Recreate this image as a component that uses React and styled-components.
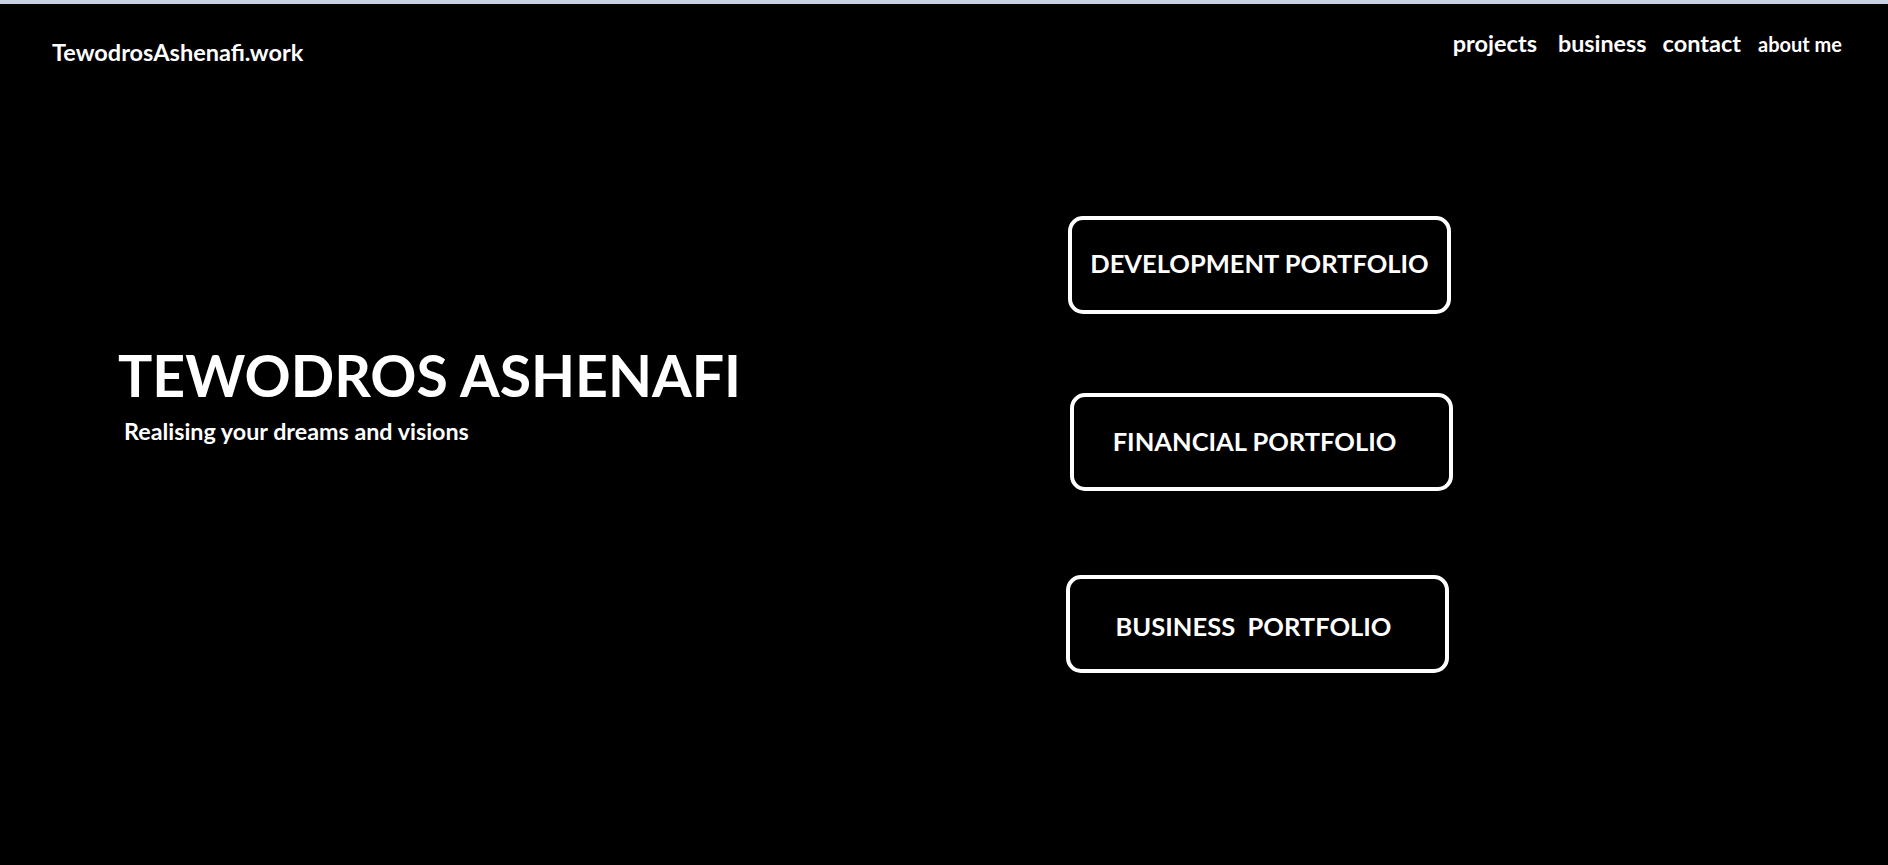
import styled, { createGlobalStyle } from "styled-components";

const GlobalStyle = createGlobalStyle`
    * {
        box-sizing: border-box;
    }
    body {
        margin: 0;
        background-color: #000000;
        font-family: 'Lato', 'Liberation Sans', sans-serif;
    }
`

const navLinks = [
    { label: "projects", size: 23.5, space: 0 },
    { label: "business", size: 23.3, space: 21 },
    { label: "contact", size: 23.5, space: 16 },
    { label: "about me", size: 20, space: 17 }
];

const portfolios = [
    { label: "DEVELOPMENT PORTFOLIO", shift: 0, top: 0, offset: 0, lift: 5 },
    { label: "FINANCIAL PORTFOLIO", shift: 2, top: 79, offset: 14, lift: 2 },
    { label: "BUSINESS\u00a0 PORTFOLIO", shift: -2, top: 84, offset: 8, lift: -4 }
];

export default function App() {
    return (
        <>
            <GlobalStyle />
            <Page>
                <Header>
                    <Logo>TewodrosAshenafi.work</Logo>
                    <Nav>
                        {navLinks.map((link) => (
                            <NavLink key={link.label} size={link.size} space={link.space}>
                                {link.label}
                            </NavLink>
                        ))}
                    </Nav>
                </Header>
                <Hero>
                    <Intro>
                        <Name>TEWODROS ASHENAFI</Name>
                        <Tagline>Realising your dreams and visions</Tagline>
                    </Intro>
                    <Portfolios>
                        {portfolios.map((item) => (
                            <PortfolioButton
                                key={item.label}
                                shift={item.shift}
                                top={item.top}
                                offset={item.offset}
                                lift={item.lift}
                            >
                                {item.label}
                            </PortfolioButton>
                        ))}
                    </Portfolios>
                </Hero>
            </Page>
        </>
    );
}

const Page = styled.div`
    min-height: 100vh;
    background-color: #000000;
    border-top: 4px solid #c9d1e2;
    color: #ffffff;
`
const Header = styled.header`
    height: 90px;
    display: flex;
    flex-direction: row;
    justify-content: space-between;
    align-items: flex-start;
    padding: 28px 46px 0 52px;
`
const Logo = styled.div`
    font-size: 23.5px;
    font-weight: 700;
    line-height: 1;
    margin-top: 9px;
`
const Nav = styled.nav`
    display: flex;
    flex-direction: row;
    align-items: baseline;
`
const NavLink = styled.a`
    margin-left: ${(props) => props.space}px;
    font-size: ${(props) => props.size}px;
    font-weight: 700;
    line-height: 1;
    color: #ffffff;
    cursor: pointer;
`
const Hero = styled.main`
    display: grid;
    grid-template-columns: 1068px 383px;
`
const Intro = styled.div`
    display: flex;
    flex-direction: column;
    padding: 253px 0 0 118px;
`
const Name = styled.h1`
    margin: 0;
    font-size: 57.2px;
    font-weight: 700;
    line-height: 1;
`
const Tagline = styled.p`
    margin: 16px 0 0 6px;
    font-size: 23.3px;
    font-weight: 700;
    line-height: 1;
`
const Portfolios = styled.div`
    display: flex;
    flex-direction: column;
    padding-top: 122px;
`
const PortfolioButton = styled.button`
    width: 383px;
    height: 98px;
    margin: ${(props) => props.top}px 0 0 ${(props) => props.shift}px;
    padding-top: ${(props) => (props.lift < 0 ? -props.lift : 0)}px;
    padding-right: ${(props) => props.offset}px;
    padding-bottom: ${(props) => (props.lift > 0 ? props.lift : 0)}px;
    padding-left: 0;
    background-color: #000000;
    border: 4px solid #ffffff;
    border-radius: 15px;
    font-family: 'Lato', 'Liberation Sans', sans-serif;
    font-size: 25.5px;
    font-weight: 700;
    color: #ffffff;
    cursor: pointer;
`
